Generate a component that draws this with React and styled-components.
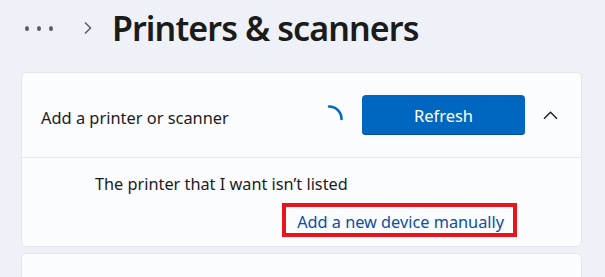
import styled, { createGlobalStyle } from "styled-components";

const GlobalStyle = createGlobalStyle`
  html, body {
    margin: 0;
    padding: 0;
    background: #eef2f8;
    font-family: "Noto Sans", "Open Sans", sans-serif;
    color: #1b1b1b;
  }
  body {
    width: 605px;
    height: 277px;
    overflow: hidden;
  }
`;

const Page = styled.div`
  padding: 0 23px 0 21px;
`;

const Breadcrumb = styled.div`
  display: flex;
  align-items: center;
  height: 72px;
  padding-bottom: 16px;
  box-sizing: border-box;
`;

const More = styled.div`
  display: flex;
  gap: 8px;
  margin-left: 4px;
  width: 28px;
`;

const Dot = styled.span`
  width: 5px;
  height: 5px;
  border-radius: 50%;
  background: #5c5c5c;
`;

const Separator = styled.svg`
  margin-left: 30px;
  margin-right: 19px;
  width: 10px;
  height: 14px;
`;

const Title = styled.h1`
  margin: 0;
  font-size: 34px;
  font-weight: 600;
  letter-spacing: -0.9px;
  line-height: 48px;
`;

const Card = styled.section`
  background: #fbfcfe;
  border: 1px solid #e2e5ea;
  border-radius: 5px;
  margin-bottom: 6px;
`;

const Header = styled.div`
  display: flex;
  align-items: center;
  height: 84px;
  padding: 0 23px 0 19px;
  border-bottom: 1px solid #e6e8ec;
`;

const Label = styled.span`
  flex: 1;
  font-size: 16.4px;
  padding-top: 4px;
`;

const Spinner = styled.svg`
  width: 28px;
  height: 28px;
  margin-right: 19px;
  margin-top: 8px;
`;

const PrimaryButton = styled.button`
  width: 163px;
  height: 40px;
  border: none;
  border-radius: 4px;
  background: #0067c0;
  color: #ffffff;
  font-family: inherit;
  font-size: 16.5px;
  box-shadow: inset 0 -1px 0 #00509a;
`;

const Chevron = styled.svg`
  width: 15px;
  height: 9px;
  margin-left: 18px;
  margin-top: 1px;
`;

const Body = styled.div`
  display: flex;
  flex-direction: column;
  height: 88px;
  padding: 14px 64px 0 73px;
  box-sizing: border-box;
`;

const Text = styled.span`
  font-size: 16.3px;
  line-height: 24px;
`;

const LinkRow = styled.div`
  display: flex;
  justify-content: flex-end;
  margin-top: 7px;
`;

const Highlight = styled.div`
  border: 4px solid #e8141e;
  padding: 0 9px 0 11px;
  height: 26px;
  display: flex;
  align-items: center;
`;

const Link = styled.a`
  color: #0b4ea2;
  font-size: 16.3px;
  text-decoration: none;
  padding-top: 4px;
`;

const EmptyCard = styled(Card)`
  height: 60px;
`;

export default function App() {
  return (
    <>
      <GlobalStyle />
      <Page>
        <Breadcrumb>
          <More>
            <Dot />
            <Dot />
            <Dot />
          </More>
          <Separator viewBox="0 0 10 14">
            <path d="M2 1.5 L7.5 7 L2 12.5" fill="none" stroke="#616161" strokeWidth="1.6" />
          </Separator>
          <Title>Printers &amp; scanners</Title>
        </Breadcrumb>
        <Card>
          <Header>
            <Label>Add a printer or scanner</Label>
            <Spinner viewBox="0 0 28 28">
              <path d="M14 1.5 A12.5 12.5 0 0 1 26.5 14" fill="none" stroke="#0067c0" strokeWidth="2.6" strokeLinecap="round" />
            </Spinner>
            <PrimaryButton>Refresh</PrimaryButton>
            <Chevron viewBox="0 0 15 9">
              <path d="M1 7.8 L7.5 1.3 L14 7.8" fill="none" stroke="#1b1b1b" strokeWidth="1.4" />
            </Chevron>
          </Header>
          <Body>
            <Text>The printer that I want isn’t listed</Text>
            <LinkRow>
              <Highlight>
                <Link href="#">Add a new device manually</Link>
              </Highlight>
            </LinkRow>
          </Body>
        </Card>
        <EmptyCard />
      </Page>
    </>
  );
}
